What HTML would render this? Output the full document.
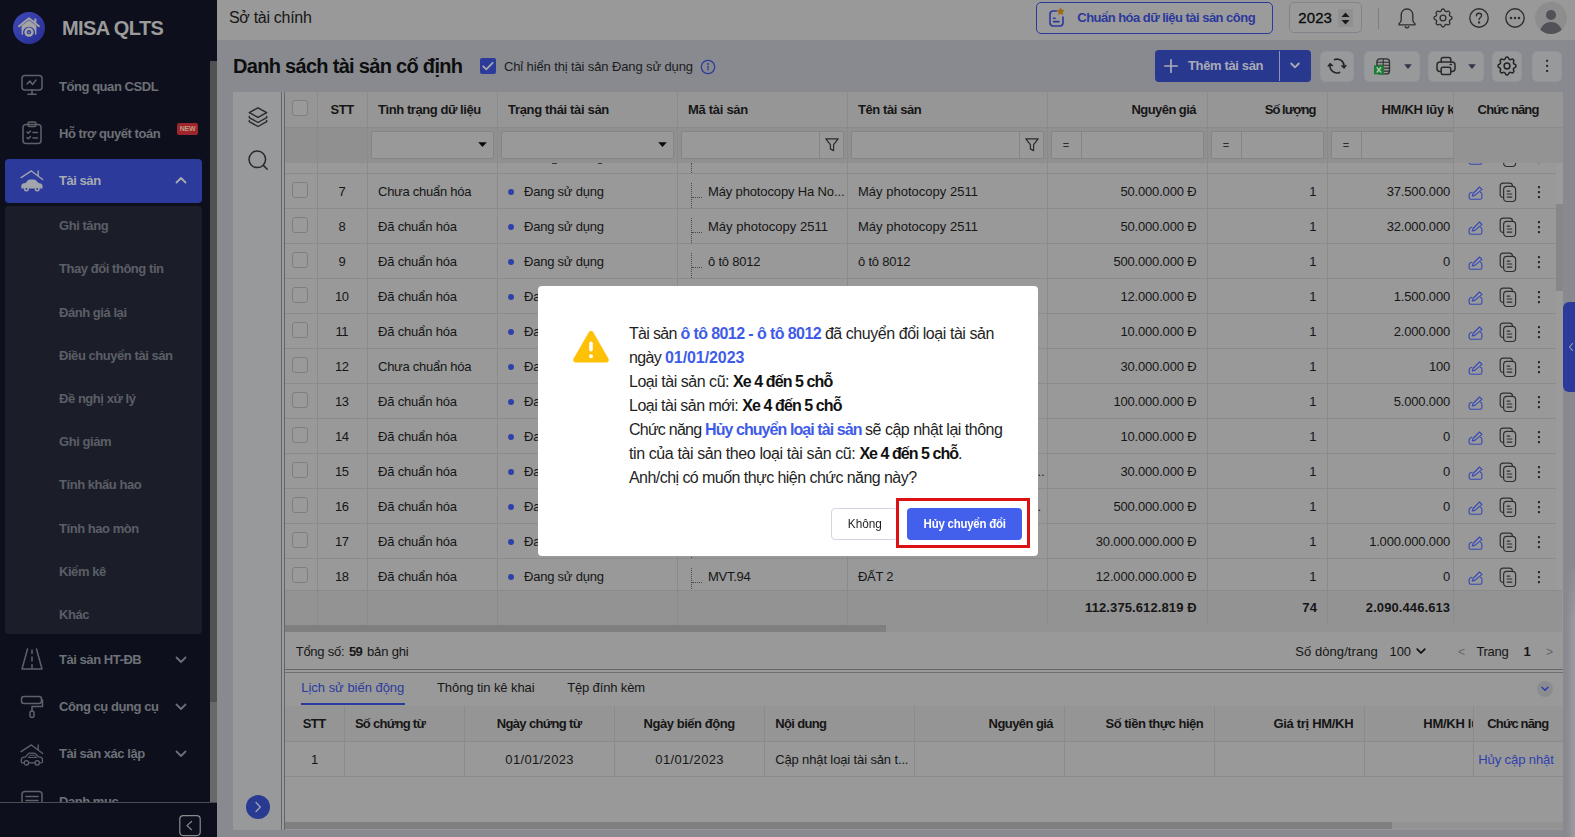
<!DOCTYPE html><html lang="vi"><head><meta charset="utf-8"><title>MISA QLTS</title><style>
*{box-sizing:border-box;margin:0;padding:0}
html,body{width:1575px;height:837px;overflow:hidden}
body{position:relative;background:#888a90;font-family:"Liberation Sans",sans-serif;font-size:13px;color:#161616;}
.abs{position:absolute}
b,.b{font-weight:bold;letter-spacing:-0.4px}
/* sidebar */
#sb{position:absolute;left:0;top:0;width:217px;height:837px;background:#0d101c;overflow:hidden}
#sb .logo{position:absolute;left:13px;top:12px;width:32px;height:32px;border-radius:50%;background:linear-gradient(135deg,#3f49b8,#262c92)}
#sb .brand{position:absolute;left:62px;top:15px;font-size:20px;font-weight:bold;color:#9b9b9b;letter-spacing:-0.6px;line-height:26px;white-space:nowrap}
#sb .mi{position:absolute;left:59px;height:20px;line-height:20px;font-size:13px;color:#6e7077;white-space:nowrap;font-weight:bold;letter-spacing:-0.45px}
#sb .si{position:absolute;left:59px;height:20px;line-height:20px;font-size:13px;color:#5b5e66;white-space:nowrap;font-weight:bold;letter-spacing:-0.45px}
#sb .act{position:absolute;left:5px;top:159px;width:197px;height:44px;background:#2b3a9b;border-radius:4px}
#sb .sub{position:absolute;left:5px;top:206px;width:197px;height:428px;background:#1b1e29;border-radius:4px}
#sb .scr{position:absolute;left:210px;top:61px;width:7px;height:741px;background:#686868}
#sb .thumb{position:absolute;left:210px;top:61px;width:7px;height:641px;background:#505153}
#sb .foot{position:absolute;left:0;top:802px;width:217px;height:35px;background:#0d101c;border-top:1px solid #4a4c55}
#sb svg{position:absolute;overflow:visible}
/* topbar */
#tb{position:absolute;left:217px;top:0;width:1358px;height:40px;background:#999999}
#tb .org{position:absolute;left:12px;top:8px;font-size:16px;line-height:20px;color:#161616;letter-spacing:-0.3px}
.btn{position:absolute;border-radius:4px;background:#96979c;border:1px solid #9a9ba0}

#main{position:absolute;left:0;top:0;width:1575px;height:837px;overflow:hidden}
.t{position:absolute;white-space:nowrap;line-height:20px;height:20px}
.r{text-align:right}
.c{text-align:center}
.hb{font-weight:bold;letter-spacing:-0.42px;color:#151515}
.vl{position:absolute;width:1px;background:#8b8b8b}
.hl{position:absolute;height:1px;background:#8b8b8b}
.cb{position:absolute;width:16px;height:16px;border:1px solid #7e7e7e;border-radius:3px;background:#9a9a9a}
.fi{position:absolute;top:131px;height:28px;border:1px solid #858585;background:#999999;border-radius:2px}
.ic{position:absolute;overflow:visible}
.tbtn{position:absolute;top:50.5px;height:31px;border-radius:5px;background:#98999b;border:1px solid #92949a}

#modal{position:absolute;left:538px;top:286px;width:500px;height:270px;background:#ffffff;border-radius:4px}
#modal .ln{position:absolute;left:91px;white-space:nowrap;font-size:16px;line-height:24px;height:24px;color:#1f1f1f;white-space:pre}
#modal .ln b{color:#111}
#modal .ln b.bl{color:#3f5ce8}
#modal .k{position:absolute;left:293px;top:222px;width:67px;height:32px;border:1px solid #d3d6e0;border-radius:4px;background:#fff;text-align:center;line-height:30px;font-size:13px;color:#1f1f1f;letter-spacing:0}
#modal .h{position:absolute;left:369px;top:222px;width:115px;height:32px;border-radius:4px;background:#4260ec;text-align:center;line-height:32px;font-size:13px;color:#fff;font-weight:bold;letter-spacing:-0.25px;overflow:visible}
#modal .red{position:absolute;left:358px;top:212px;width:134px;height:50px;border:3px solid #dc1212}
</style></head><body>
<div id="sb">
<div class="logo"></div>
<svg style="left:16px;top:14px" width="26" height="26" viewBox="0 0 26 26"><path d="M3 12.2L13 4.2L23 12.2" fill="none" stroke="#a4a4a4" stroke-width="2" stroke-linejoin="round" stroke-linecap="round"/><rect x="18.2" y="4.6" width="2.2" height="4" fill="#a4a4a4"/><path d="M5.6 20.5V11.8L13 6.2l7.4 5.6v8.700000000000001h-1.7A6 6 0 107.3 20.5z" fill="#a4a4a4"/><circle cx="13" cy="18.2" r="4.6" fill="#a4a4a4"/><circle cx="13" cy="18.2" r="2.1" fill="#3038a2"/><circle cx="13" cy="18.2" r="0.8" fill="#a4a4a4"/></svg>
<div class="brand">MISA QLTS</div>
<div class="act"></div><div class="sub"></div>
<div class="mi" style="top:77px">Tổng quan CSDL</div>
<div class="mi" style="top:124px">Hỗ trợ quyết toán</div>
<div class="mi" style="top:171px;color:#a9abb3">Tài sản</div>
<div class="mi" style="top:650px">Tài sản HT-ĐB</div>
<div class="mi" style="top:697px">Công cụ dụng cụ</div>
<div class="mi" style="top:744px">Tài sản xác lập</div>
<div class="mi" style="top:792px">Danh mục</div>
<div class="si" style="top:216px">Ghi tăng</div>
<div class="si" style="top:259px">Thay đổi thông tin</div>
<div class="si" style="top:303px">Đánh giá lại</div>
<div class="si" style="top:346px">Điều chuyển tài sản</div>
<div class="si" style="top:389px">Đề nghị xử lý</div>
<div class="si" style="top:432px">Ghi giảm</div>
<div class="si" style="top:475px">Tính khấu hao</div>
<div class="si" style="top:519px">Tính hao mòn</div>
<div class="si" style="top:562px">Kiểm kê</div>
<div class="si" style="top:605px">Khác</div>
<div class="abs" style="left:177px;top:123px;width:21px;height:12px;background:#9d252b;border-radius:2px;color:#c09a84;font-size:7px;font-weight:bold;line-height:12px;text-align:center;letter-spacing:-0.2px">NEW</div>
<svg style="left:181px;top:180.0px" width="1" height="1"><path d="M-4.5 2.5 L0 -2 L4.5 2.5" fill="none" stroke="#a9abb3" stroke-width="1.8" stroke-linecap="round" stroke-linejoin="round"/></svg>
<svg style="left:181px;top:659.6px" width="1" height="1"><path d="M-4.5 -2.5 L0 2 L4.5 -2.5" fill="none" stroke="#6c6e75" stroke-width="1.8" stroke-linecap="round" stroke-linejoin="round"/></svg>
<svg style="left:181px;top:706.6px" width="1" height="1"><path d="M-4.5 -2.5 L0 2 L4.5 -2.5" fill="none" stroke="#6c6e75" stroke-width="1.8" stroke-linecap="round" stroke-linejoin="round"/></svg>
<svg style="left:181px;top:753.6px" width="1" height="1"><path d="M-4.5 -2.5 L0 2 L4.5 -2.5" fill="none" stroke="#6c6e75" stroke-width="1.8" stroke-linecap="round" stroke-linejoin="round"/></svg>
<svg style="left:21px;top:74px" width="22" height="22" viewBox="0 0 22 22" fill="none" stroke="#5f6168" stroke-width="1.5" stroke-linecap="round" stroke-linejoin="round"><rect x="1" y="1.5" width="20" height="14.5" rx="3"/><path d="M11 16v4M7 20.3h8"/><path d="M6 10l3-3 2.5 3.5 3.5-4.5"/></svg>
<svg style="left:21px;top:121px" width="22" height="24" viewBox="0 0 22 24" fill="none" stroke="#5f6168" stroke-width="1.5" stroke-linecap="round" stroke-linejoin="round"><rect x="2" y="3.5" width="18" height="19" rx="3"/><rect x="7" y="1" width="8" height="4.5" rx="1.5"/><path d="M6 11l1.3 1.3L9.5 10M12 11.5h4.5M6 16.5l1.3 1.3L9.5 15.5M12 17h4.5"/></svg>
<svg style="left:19px;top:167px" width="26" height="26" viewBox="0 0 26 26"><path d="M2.1 10.6L12.4 3.9L23.7 12.6M19.2 4v4.6" fill="none" stroke="#a3a5ad" stroke-width="1.3" stroke-linecap="round" stroke-linejoin="round"/><path d="M2.3 21.6v-2.400000000000002c0-1.6 1-2.600000000000001 2.6-2.900000000000002l1.7-.3 2.300000000000001-2.700000000000001c.5-.6 1.1-.9 1.9-.9h3.900000000000001c.9 0 1.6.3 2.200000000000001.9l2.600000000000001 2.700000000000001 2 .4c1.300000000000001.3 2 1.200000000000001 2 2.500000000000001v2.700000000000001z" fill="#a3a5ad"/><circle cx="7.4" cy="22" r="2.5" fill="#a3a5ad"/><circle cx="18.2" cy="22" r="2.5" fill="#a3a5ad"/><circle cx="7.4" cy="22" r="1" fill="#2b3a9b"/><circle cx="18.2" cy="22" r="1" fill="#2b3a9b"/></svg>
<svg style="left:20px;top:647px" width="24" height="24" viewBox="0 0 24 24" fill="none" stroke="#5f6168" stroke-width="1.5" stroke-linecap="round" stroke-linejoin="round"><path d="M7.5 2L2 22h20L16.500000000000004 2"/><path d="M12 3v3.500000000000001M12 10v4M12 17.5v3.500000000000001"/></svg>
<svg style="left:20px;top:695px" width="24" height="24" viewBox="0 0 24 24" fill="none" stroke="#5f6168" stroke-width="1.5" stroke-linecap="round" stroke-linejoin="round"><rect x="1.5" y="1.5" width="20" height="7" rx="2.5"/><path d="M21.5 5h1v6.5h-10.5v4.500000000000001"/><rect x="10" y="16" width="4" height="6.5" rx="2"/></svg>
<svg style="left:19px;top:741px" width="26" height="26" viewBox="0 0 26 26" fill="none" stroke="#5f6168" stroke-width="1.3" stroke-linecap="round" stroke-linejoin="round"><path d="M2.1 10.6L12.4 3.9L23.7 12.6M19.2 4v4.6"/><path d="M4.6 21.8H3.6c-.8 0-1.300000000000001-.5-1.300000000000001-1.300000000000001v-1.5c0-1.6 1-2.600000000000001 2.6-2.900000000000002l1.7-.3 2.300000000000001-2.700000000000001c.5-.6 1.1-.9 1.9-.9h3.900000000000001c.9 0 1.6.3 2.200000000000001.9l2.600000000000001 2.700000000000001 2 .4c1.300000000000001.3 2 1.200000000000001 2 2.500000000000001v1.8c0 .8-.5 1.300000000000001-1.300000000000001 1.300000000000001h-.8M10 21.8h5.6"/><circle cx="7.4" cy="21.8" r="2.2"/><circle cx="18.2" cy="21.8" r="2.2"/><path d="M9.6 16.2l1.6-2h4.2l2 2z" stroke-width="1"/></svg>
<svg style="left:21px;top:790px" width="22" height="22" viewBox="0 0 22 22" fill="none" stroke="#5f6168" stroke-width="1.5" stroke-linecap="round" stroke-linejoin="round"><rect x="1" y="1.5" width="20" height="16" rx="3"/><path d="M5 6.5h12M5 10.5h12"/></svg>
<div class="scr"></div><div class="thumb"></div>
<div class="foot"></div>
<svg style="left:179px;top:815px" width="22" height="22" viewBox="0 0 22 22" fill="none" stroke="#8b8b8b" stroke-width="1.2" stroke-linecap="round" stroke-linejoin="round"><rect x="0.8" y="0.6" width="20.4" height="20" rx="3.5"/><path d="M12.5 6.5L8 10.600000000000001L12.5 14.7"/></svg>
</div>
<div id="tb"><div class="org">Sở tài chính</div></div>
<div id="main">
<div class="abs" style="left:1036px;top:2px;width:237px;height:32px;border:1px solid #2b3a9b;border-radius:5px;background:#9b9b9b"></div>
<div class="t" style="top:8px;letter-spacing:-0.528px;font-weight:bold;color:#2c399c;left:1077.3px;">Chuẩn hóa dữ liệu tài sản công</div>
<svg class="ic" style="left:1048px;top:6px" width="18" height="22" viewBox="0 0 18 22"><path d="M8.5 5H5.2C3.4 5 2 6.4 2 8.2v8.6C2 18.600000000000001 3.4 20 5.2 20h6.6c1.8 0 3.2-1.4 3.2-3.2V11" fill="none" stroke="#2c399c" stroke-width="1.6" stroke-linecap="round"/><path d="M5.5 12.2h1.6M5.5 15.600000000000001h5.5" stroke="#2c399c" stroke-width="1.6" stroke-linecap="round"/><path d="M12.6 1.2l1.25 2.6 2.85.4-2.05 2 .5 2.85-2.55-1.35-2.55 1.35.5-2.85-2.05-2 2.85-.4z" fill="#9c6a12"/></svg>
<div class="abs" style="left:1289px;top:2px;width:73px;height:31px;border:1px solid #82848c;border-radius:5px;background:#9a9a9a"></div>
<div class="t" style="top:8px;letter-spacing:0.075px;font-size:15px;color:#0a0a0a;left:1298.3px;-webkit-text-stroke:0.3px #0a0a0a;">2023</div>
<div class="abs" style="left:1338px;top:9px;width:15px;height:18px;background:#909090"></div>
<svg class="ic" style="left:1341px;top:12px" width="9" height="13" viewBox="0 0 9 13"><path d="M0.5 5L4.5 0.5L8.5 5zM0.5 8L4.5 12.5L8.5 8z" fill="#1a1a1a"/></svg>
<div class="abs" style="left:1378px;top:8px;width:1px;height:21px;background:#7e7e7e"></div>
<svg class="ic" style="left:1397px;top:8px" width="20" height="21" viewBox="0 0 20 21" fill="none" stroke="#2e2e2e" stroke-width="1.35" stroke-linecap="round" stroke-linejoin="round"><path d="M10 1C6.3 1 4.2 3.8 4.2 7.2v4.9c0 1.5-.9 2.7-2.2 3.700000000000001V16.8h16v-1c-1.3-1-2.2-2.2-2.2-3.700000000000001V7.2C15.8 3.8 13.700000000000001 1 10 1z"/><path d="M8.3 18.7c.3.7.9 1.1 1.7 1.1s1.4-.4 1.7-1.1"/></svg>
<svg class="ic" style="left:1433px;top:8px" width="20" height="20" viewBox="0 0 20 20" fill="none" stroke="#2e2e2e" stroke-width="1.35" stroke-linecap="round" stroke-linejoin="round"><path d="M8.325 2.317c.426-1.756 2.924-1.756 3.35 0a1.724 1.724 0 002.573 1.066c1.543-.94 3.31.826 2.37 2.37a1.724 1.724 0 001.065 2.572c1.756.426 1.756 2.924 0 3.35a1.724 1.724 0 00-1.066 2.573c.94 1.543-.826 3.31-2.37 2.37a1.724 1.724 0 00-2.572 1.065c-.426 1.756-2.924 1.756-3.35 0a1.724 1.724 0 00-2.573-1.066c-1.543.94-3.31-.826-2.37-2.37a1.724 1.724 0 00-1.065-2.572c-1.756-.426-1.756-2.924 0-3.35a1.724 1.724 0 001.066-2.573c-.94-1.543.826-3.31 2.37-2.37.996.608 2.296.07 2.572-1.065z"/><circle cx="10" cy="10" r="2.9"/></svg>
<svg class="ic" style="left:1469px;top:8px" width="20" height="20" viewBox="0 0 20 20" fill="none" stroke="#2e2e2e" stroke-width="1.35" stroke-linecap="round" stroke-linejoin="round"><circle cx="10" cy="10" r="9.2"/><path d="M7.4 7.7c0-1.5 1.1-2.5 2.6-2.5s2.6 1 2.6 2.3c0 1.9-2.5 2-2.5 4"/><circle cx="10.1" cy="14.4" r="0.5" fill="#2e2e2e"/></svg>
<svg class="ic" style="left:1505px;top:8px" width="20" height="20" viewBox="0 0 20 20" fill="none" stroke="#2e2e2e" stroke-width="1.35" stroke-linecap="round" stroke-linejoin="round"><circle cx="10" cy="10" r="9.2"/><circle cx="6" cy="10" r="0.6" fill="#2e2e2e"/><circle cx="10" cy="10" r="0.6" fill="#2e2e2e"/><circle cx="14" cy="10" r="0.6" fill="#2e2e2e"/></svg>
<div class="abs" style="left:1535px;top:1.5px;width:32px;height:32px;border-radius:50%;background:#8d8d8d;overflow:hidden"><div class="abs" style="left:11.4px;top:8.8px;width:9.8px;height:9.8px;border-radius:50%;background:#515157"></div><div class="abs" style="left:5px;top:20.6px;width:22.4px;height:22px;border-radius:50%;background:#515157"></div></div>
<div class="t" style="top:53px;letter-spacing:-0.697px;font-size:20px;font-weight:bold;color:#0e0e0e;line-height:26px;height:26px;left:233px;">Danh sách tài sản cố định</div>
<div class="abs" style="left:480px;top:58px;width:16px;height:16px;border-radius:2px;background:#2b3a9b"></div>
<svg class="ic" style="left:480px;top:58px" width="16" height="16" viewBox="0 0 16 16"><path d="M3.2 8.3l3.1 3.1 6.3-6.6" fill="none" stroke="#a6a6a6" stroke-width="1.9" stroke-linecap="round" stroke-linejoin="round"/></svg>
<div class="t" style="top:57px;letter-spacing:-0.125px;color:#1c1c1c;left:504px;">Chỉ hiển thị tài sản Đang sử dụng</div>
<svg class="ic" style="left:700px;top:59px" width="16" height="16" viewBox="0 0 16 16" fill="none" stroke="#2b3a9b" stroke-width="1.2" stroke-linecap="round"><circle cx="8" cy="8" r="6.7"/><path d="M8 7.3v3.7"/><circle cx="8" cy="4.9" r="0.4" fill="#2b3a9b"/></svg>
<div class="abs" style="left:1155px;top:50px;width:156px;height:32px;border-radius:4px;background:#28388f"></div>
<div class="abs" style="left:1279px;top:51px;width:1px;height:30px;background:#8e93b8"></div>
<svg class="ic" style="left:1164px;top:59px" width="14" height="14" viewBox="0 0 14 14"><path d="M7 0.8v12.4M0.8 7h12.4" stroke="#a9abb6" stroke-width="1.7" stroke-linecap="round"/></svg>
<div class="t" style="top:56px;letter-spacing:-0.361px;font-weight:bold;color:#a9abb6;left:1188px;">Thêm tài sản</div>
<svg class="ic" style="left:1290px;top:62px" width="10" height="8" viewBox="0 0 10 8"><path d="M1.2 1.5L5 5.3 8.8 1.5" fill="none" stroke="#a9abb6" stroke-width="1.9" stroke-linecap="round" stroke-linejoin="round"/></svg>
<div class="tbtn" style="left:1320px;width:34px"></div>
<div class="tbtn" style="left:1364px;width:56px"></div>
<div class="tbtn" style="left:1428px;width:56px"></div>
<div class="tbtn" style="left:1492px;width:30px"></div>
<div class="tbtn" style="left:1532px;width:30px"></div>
<svg class="ic" style="left:1327px;top:56px" width="20" height="20" viewBox="0 0 20 20" fill="none" stroke="#262626" stroke-width="1.6" stroke-linecap="round" stroke-linejoin="round"><path d="M7.6 3.6A6.9 6.9 0 0117 10.5M12.6 16.400000000000002A6.9 6.9 0 013.1 8.9"/><path d="M14.6 9.8l2.5 2.3 2-2.7" fill="#262626" stroke-width="1.2"/><path d="M1.1 10.2l1.9-2.7 2.6 2.2" fill="#262626" stroke-width="1.2"/></svg>
<svg class="ic" style="left:1373px;top:57px" width="18" height="18" viewBox="0 0 18 18"><rect x="3.9" y="1.9" width="12.6" height="15" rx="3" fill="none" stroke="#2e2e2e" stroke-width="1.3"/><path d="M10.2 2v15M4 5.2h12.5M4 8.2h12.5M4 11.1h12.5M4 14.1h12.5" stroke="#2e2e2e" stroke-width="1.1"/><rect x="1" y="8.3" width="10" height="9.1" fill="#1f7a35"/><path d="M3.7 10.3l4.4 5.2M8.1 10.3l-4.4 5.2" stroke="#a9c9b0" stroke-width="1.4"/></svg>
<svg class="ic" style="left:1404px;top:64px" width="8" height="5" viewBox="0 0 8 5"><path d="M0.2 0.3h7.6L4 4.9z" fill="#2f3447"/></svg>
<svg class="ic" style="left:1436px;top:56px" width="20" height="20" viewBox="0 0 20 20" fill="none" stroke="#2a2a2a" stroke-width="1.5" stroke-linecap="round" stroke-linejoin="round"><path d="M5.2 6V3.4c0-1.1.8-1.9 1.9-1.9h5.800000000000001c1.1 0 1.9.8 1.9 1.9V6"/><rect x="1" y="6" width="18" height="9.5" rx="3"/><rect x="5.2" y="11.2" width="9.6" height="7.3" rx="1.8" fill="#979a9f"/><path d="M14.2 8.6h1.2"/></svg>
<svg class="ic" style="left:1468px;top:64px" width="8" height="5" viewBox="0 0 8 5"><path d="M0.2 0.3h7.6L4 4.9z" fill="#2f3447"/></svg>
<svg class="ic" style="left:1497px;top:56px" width="20" height="20" viewBox="0 0 20 20" fill="none" stroke="#222" stroke-width="1.5" stroke-linecap="round" stroke-linejoin="round"><path d="M8.325 2.317c.426-1.756 2.924-1.756 3.35 0a1.724 1.724 0 002.573 1.066c1.543-.94 3.31.826 2.37 2.37a1.724 1.724 0 001.065 2.572c1.756.426 1.756 2.924 0 3.35a1.724 1.724 0 00-1.066 2.573c.94 1.543-.826 3.31-2.37 2.37a1.724 1.724 0 00-2.572 1.065c-.426 1.756-2.924 1.756-3.35 0a1.724 1.724 0 00-2.573-1.066c-1.543.94-3.31-.826-2.37-2.37a1.724 1.724 0 00-1.065-2.572c-1.756-.426-1.756-2.924 0-3.35a1.724 1.724 0 001.066-2.573c-.94-1.543.826-3.31 2.37-2.37.996.608 2.296.07 2.572-1.065z"/><circle cx="10" cy="10" r="2.9"/></svg>
<svg class="ic" style="left:1545px;top:59px" width="4" height="14" viewBox="0 0 4 14"><rect x="1.1" y="0.8" width="2" height="2" fill="#23273a"/><rect x="1.1" y="5.9" width="2" height="2" fill="#23273a"/><rect x="1.1" y="11" width="2" height="2" fill="#23273a"/></svg>
<div class="abs" style="left:233px;top:92px;width:1330px;height:738px;background:#999999"></div>
<div class="abs" style="left:233px;top:92px;width:49px;height:738px;background:#98999b"></div>
<div class="abs" style="left:281px;top:92px;width:4px;height:738px;background:#9b9b9b;border-left:1px solid #636568;border-right:1px solid #636568"></div>
<svg class="ic" style="left:247px;top:106px" width="22" height="22" viewBox="0 0 22 22" fill="none" stroke="#2a2a2a" stroke-width="1.4" stroke-linecap="round" stroke-linejoin="round"><path d="M11 1.8L2.3 6.6 11 11.4l8.7-4.800000000000001z"/><path d="M2.3 10.5v1.2l8.7 4.800000000000001 8.7-4.800000000000001v-1.2M2.3 14.5v1.2L11 20.5l8.7-4.800000000000001v-1.2"/></svg>
<svg class="ic" style="left:247px;top:149px" width="22" height="22" viewBox="0 0 22 22" fill="none" stroke="#2a2a2a" stroke-width="1.5" stroke-linecap="round"><circle cx="10.3" cy="10.3" r="8.3"/><path d="M16.6 16.6l3.6 3.6"/></svg>
<div class="abs" style="left:246px;top:795px;width:24px;height:24px;border-radius:50%;background:#283a92"></div>
<svg class="ic" style="left:254px;top:801px" width="8" height="12" viewBox="0 0 8 12"><path d="M2 1.5L6.3 6 2 10.5" fill="none" stroke="#a0a4b8" stroke-width="1.3" stroke-linecap="round" stroke-linejoin="round"/></svg>
<div class="abs" style="left:285px;top:92px;width:1278px;height:36px;background:#969696"></div>
<div class="abs" style="left:285px;top:128px;width:1278px;height:35px;background:#909090"></div>
<div class="hl" style="left:285px;top:127px;width:1278px"></div>
<div class="abs" style="left:285px;top:163px;width:1168px;height:427px;overflow:hidden">
<div class="hl" style="left:0;top:10px;width:1168px"></div>
<div class="hl" style="left:0;top:45px;width:1168px"></div>
<div class="cb" style="left:7px;top:19px"></div>
<div class="t" style="top:19px;letter-spacing:-0.181px;left:31.91px;width:50px;text-align:center;">7</div>
<div class="t" style="top:19px;letter-spacing:-0.261px;left:93px;">Chưa chuẩn hóa</div>
<div class="abs" style="left:223px;top:26px;width:6px;height:6px;border-radius:50%;background:#2f40a8"></div>
<div class="t" style="top:19px;letter-spacing:-0.222px;left:239px;">Đang sử dụng</div>
<div class="abs" style="left:406px;top:20px;width:0;height:25px;border-left:1px dotted #4a4a4a"></div>
<div class="abs" style="left:407px;top:34px;width:10px;height:0;border-top:1px dotted #4a4a4a"></div>
<div class="t" style="top:19px;letter-spacing:-0.141px;left:423px;">Máy photocopy Ha No...</div>
<div class="t" style="top:19px;letter-spacing:0.016px;left:573px;">Máy photocopy 2511</div>
<div class="t" style="top:19px;letter-spacing:-0.177px;left:771.42px;width:140px;text-align:right;">50.000.000 Đ</div>
<div class="t" style="top:19px;letter-spacing:-0.181px;left:931.22px;width:100px;text-align:right;">1</div>
<div class="t" style="top:19px;letter-spacing:-0.181px;left:1052.02px;width:113px;text-align:right;">37.500.000</div>
<div class="hl" style="left:0;top:80px;width:1168px"></div>
<div class="cb" style="left:7px;top:54px"></div>
<div class="t" style="top:54px;letter-spacing:-0.181px;left:31.91px;width:50px;text-align:center;">8</div>
<div class="t" style="top:54px;letter-spacing:-0.178px;left:93px;">Đã chuẩn hóa</div>
<div class="abs" style="left:223px;top:61px;width:6px;height:6px;border-radius:50%;background:#2f40a8"></div>
<div class="t" style="top:54px;letter-spacing:-0.222px;left:239px;">Đang sử dụng</div>
<div class="abs" style="left:406px;top:55px;width:0;height:25px;border-left:1px dotted #4a4a4a"></div>
<div class="abs" style="left:407px;top:69px;width:10px;height:0;border-top:1px dotted #4a4a4a"></div>
<div class="t" style="top:54px;letter-spacing:0.016px;left:423px;">Máy photocopy 2511</div>
<div class="t" style="top:54px;letter-spacing:0.016px;left:573px;">Máy photocopy 2511</div>
<div class="t" style="top:54px;letter-spacing:-0.177px;left:771.42px;width:140px;text-align:right;">50.000.000 Đ</div>
<div class="t" style="top:54px;letter-spacing:-0.181px;left:931.22px;width:100px;text-align:right;">1</div>
<div class="t" style="top:54px;letter-spacing:-0.181px;left:1052.02px;width:113px;text-align:right;">32.000.000</div>
<div class="hl" style="left:0;top:115px;width:1168px"></div>
<div class="cb" style="left:7px;top:89px"></div>
<div class="t" style="top:89px;letter-spacing:-0.181px;left:31.91px;width:50px;text-align:center;">9</div>
<div class="t" style="top:89px;letter-spacing:-0.178px;left:93px;">Đã chuẩn hóa</div>
<div class="abs" style="left:223px;top:96px;width:6px;height:6px;border-radius:50%;background:#2f40a8"></div>
<div class="t" style="top:89px;letter-spacing:-0.222px;left:239px;">Đang sử dụng</div>
<div class="abs" style="left:406px;top:90px;width:0;height:25px;border-left:1px dotted #4a4a4a"></div>
<div class="abs" style="left:407px;top:104px;width:10px;height:0;border-top:1px dotted #4a4a4a"></div>
<div class="t" style="top:89px;letter-spacing:-0.203px;left:423px;">ô tô 8012</div>
<div class="t" style="top:89px;letter-spacing:-0.203px;left:573px;">ô tô 8012</div>
<div class="t" style="top:89px;letter-spacing:-0.178px;left:771.42px;width:140px;text-align:right;">500.000.000 Đ</div>
<div class="t" style="top:89px;letter-spacing:-0.181px;left:931.22px;width:100px;text-align:right;">1</div>
<div class="t" style="top:89px;letter-spacing:-0.181px;left:1052.02px;width:113px;text-align:right;">0</div>
<div class="hl" style="left:0;top:150px;width:1168px"></div>
<div class="cb" style="left:7px;top:124px"></div>
<div class="t" style="top:124px;letter-spacing:-0.362px;left:31.82px;width:50px;text-align:center;">10</div>
<div class="t" style="top:124px;letter-spacing:-0.178px;left:93px;">Đã chuẩn hóa</div>
<div class="abs" style="left:223px;top:131px;width:6px;height:6px;border-radius:50%;background:#2f40a8"></div>
<div class="t" style="top:124px;letter-spacing:-0.222px;left:239px;">Đang sử dụng</div>
<div class="abs" style="left:406px;top:125px;width:0;height:25px;border-left:1px dotted #4a4a4a"></div>
<div class="abs" style="left:407px;top:139px;width:10px;height:0;border-top:1px dotted #4a4a4a"></div>
<div class="t" style="top:124px;letter-spacing:-0.204px;left:423px;">Máy tính 2511</div>
<div class="t" style="top:124px;letter-spacing:-0.197px;left:573px;">Máy tính để bàn 2511</div>
<div class="t" style="top:124px;letter-spacing:-0.177px;left:771.42px;width:140px;text-align:right;">12.000.000 Đ</div>
<div class="t" style="top:124px;letter-spacing:-0.181px;left:931.22px;width:100px;text-align:right;">1</div>
<div class="t" style="top:124px;letter-spacing:-0.181px;left:1052.02px;width:113px;text-align:right;">1.500.000</div>
<div class="hl" style="left:0;top:185px;width:1168px"></div>
<div class="cb" style="left:7px;top:159px"></div>
<div class="t" style="top:159px;letter-spacing:-0.338px;left:31.83px;width:50px;text-align:center;">11</div>
<div class="t" style="top:159px;letter-spacing:-0.178px;left:93px;">Đã chuẩn hóa</div>
<div class="abs" style="left:223px;top:166px;width:6px;height:6px;border-radius:50%;background:#2f40a8"></div>
<div class="t" style="top:159px;letter-spacing:-0.222px;left:239px;">Đang sử dụng</div>
<div class="abs" style="left:406px;top:160px;width:0;height:25px;border-left:1px dotted #4a4a4a"></div>
<div class="abs" style="left:407px;top:174px;width:10px;height:0;border-top:1px dotted #4a4a4a"></div>
<div class="t" style="top:159px;letter-spacing:-0.21px;left:423px;">Máy in 2511</div>
<div class="t" style="top:159px;letter-spacing:-0.21px;left:573px;">Máy in 2511</div>
<div class="t" style="top:159px;letter-spacing:-0.177px;left:771.42px;width:140px;text-align:right;">10.000.000 Đ</div>
<div class="t" style="top:159px;letter-spacing:-0.181px;left:931.22px;width:100px;text-align:right;">1</div>
<div class="t" style="top:159px;letter-spacing:-0.181px;left:1052.02px;width:113px;text-align:right;">2.000.000</div>
<div class="hl" style="left:0;top:220px;width:1168px"></div>
<div class="cb" style="left:7px;top:194px"></div>
<div class="t" style="top:194px;letter-spacing:-0.362px;left:31.82px;width:50px;text-align:center;">12</div>
<div class="t" style="top:194px;letter-spacing:-0.261px;left:93px;">Chưa chuẩn hóa</div>
<div class="abs" style="left:223px;top:201px;width:6px;height:6px;border-radius:50%;background:#2f40a8"></div>
<div class="t" style="top:194px;letter-spacing:-0.222px;left:239px;">Đang sử dụng</div>
<div class="abs" style="left:406px;top:195px;width:0;height:25px;border-left:1px dotted #4a4a4a"></div>
<div class="abs" style="left:407px;top:209px;width:10px;height:0;border-top:1px dotted #4a4a4a"></div>
<div class="t" style="top:194px;letter-spacing:-0.211px;left:423px;">Máy chiếu 01</div>
<div class="t" style="top:194px;letter-spacing:-0.211px;left:573px;">Máy chiếu 01</div>
<div class="t" style="top:194px;letter-spacing:-0.177px;left:771.42px;width:140px;text-align:right;">30.000.000 Đ</div>
<div class="t" style="top:194px;letter-spacing:-0.181px;left:931.22px;width:100px;text-align:right;">1</div>
<div class="t" style="top:194px;letter-spacing:-0.271px;left:1051.93px;width:113px;text-align:right;">100</div>
<div class="hl" style="left:0;top:255px;width:1168px"></div>
<div class="cb" style="left:7px;top:229px"></div>
<div class="t" style="top:229px;letter-spacing:-0.362px;left:31.82px;width:50px;text-align:center;">13</div>
<div class="t" style="top:229px;letter-spacing:-0.178px;left:93px;">Đã chuẩn hóa</div>
<div class="abs" style="left:223px;top:236px;width:6px;height:6px;border-radius:50%;background:#2f40a8"></div>
<div class="t" style="top:229px;letter-spacing:-0.222px;left:239px;">Đang sử dụng</div>
<div class="abs" style="left:406px;top:230px;width:0;height:25px;border-left:1px dotted #4a4a4a"></div>
<div class="abs" style="left:407px;top:244px;width:10px;height:0;border-top:1px dotted #4a4a4a"></div>
<div class="t" style="top:229px;letter-spacing:-0.21px;left:423px;">Điều hòa 01</div>
<div class="t" style="top:229px;letter-spacing:-0.21px;left:573px;">Điều hòa 01</div>
<div class="t" style="top:229px;letter-spacing:-0.178px;left:771.42px;width:140px;text-align:right;">100.000.000 Đ</div>
<div class="t" style="top:229px;letter-spacing:-0.181px;left:931.22px;width:100px;text-align:right;">1</div>
<div class="t" style="top:229px;letter-spacing:-0.181px;left:1052.02px;width:113px;text-align:right;">5.000.000</div>
<div class="hl" style="left:0;top:290px;width:1168px"></div>
<div class="cb" style="left:7px;top:264px"></div>
<div class="t" style="top:264px;letter-spacing:-0.362px;left:31.82px;width:50px;text-align:center;">14</div>
<div class="t" style="top:264px;letter-spacing:-0.178px;left:93px;">Đã chuẩn hóa</div>
<div class="abs" style="left:223px;top:271px;width:6px;height:6px;border-radius:50%;background:#2f40a8"></div>
<div class="t" style="top:264px;letter-spacing:-0.222px;left:239px;">Đang sử dụng</div>
<div class="abs" style="left:406px;top:265px;width:0;height:25px;border-left:1px dotted #4a4a4a"></div>
<div class="abs" style="left:407px;top:279px;width:10px;height:0;border-top:1px dotted #4a4a4a"></div>
<div class="t" style="top:264px;letter-spacing:-0.222px;left:423px;">Bàn họp 01</div>
<div class="t" style="top:264px;letter-spacing:-0.222px;left:573px;">Bàn họp 01</div>
<div class="t" style="top:264px;letter-spacing:-0.177px;left:771.42px;width:140px;text-align:right;">10.000.000 Đ</div>
<div class="t" style="top:264px;letter-spacing:-0.181px;left:931.22px;width:100px;text-align:right;">1</div>
<div class="t" style="top:264px;letter-spacing:-0.181px;left:1052.02px;width:113px;text-align:right;">0</div>
<div class="hl" style="left:0;top:325px;width:1168px"></div>
<div class="cb" style="left:7px;top:299px"></div>
<div class="t" style="top:299px;letter-spacing:-0.362px;left:31.82px;width:50px;text-align:center;">15</div>
<div class="t" style="top:299px;letter-spacing:-0.178px;left:93px;">Đã chuẩn hóa</div>
<div class="abs" style="left:223px;top:306px;width:6px;height:6px;border-radius:50%;background:#2f40a8"></div>
<div class="t" style="top:299px;letter-spacing:-0.222px;left:239px;">Đang sử dụng</div>
<div class="abs" style="left:406px;top:300px;width:0;height:25px;border-left:1px dotted #4a4a4a"></div>
<div class="abs" style="left:407px;top:314px;width:10px;height:0;border-top:1px dotted #4a4a4a"></div>
<div class="t" style="top:299px;letter-spacing:-0.246px;left:423px;">TS.0015</div>
<div class="t" style="top:299px;letter-spacing:-0.188px;left:573px;">Thiết bị văn phòng 01</div>
<div class="t" style="top:299px;letter-spacing:-0.177px;left:771.42px;width:140px;text-align:right;">30.000.000 Đ</div>
<div class="t" style="top:299px;letter-spacing:-0.181px;left:931.22px;width:100px;text-align:right;">1</div>
<div class="t" style="top:299px;letter-spacing:-0.181px;left:1052.02px;width:113px;text-align:right;">0</div>
<div class="hl" style="left:0;top:360px;width:1168px"></div>
<div class="cb" style="left:7px;top:334px"></div>
<div class="t" style="top:334px;letter-spacing:-0.362px;left:31.82px;width:50px;text-align:center;">16</div>
<div class="t" style="top:334px;letter-spacing:-0.178px;left:93px;">Đã chuẩn hóa</div>
<div class="abs" style="left:223px;top:341px;width:6px;height:6px;border-radius:50%;background:#2f40a8"></div>
<div class="t" style="top:334px;letter-spacing:-0.222px;left:239px;">Đang sử dụng</div>
<div class="abs" style="left:406px;top:335px;width:0;height:25px;border-left:1px dotted #4a4a4a"></div>
<div class="abs" style="left:407px;top:349px;width:10px;height:0;border-top:1px dotted #4a4a4a"></div>
<div class="t" style="top:334px;letter-spacing:-0.246px;left:423px;">TS.0016</div>
<div class="t" style="top:334px;letter-spacing:-0.191px;left:573px;">Xe ô tô phục vụ 02</div>
<div class="t" style="top:334px;letter-spacing:-0.178px;left:771.42px;width:140px;text-align:right;">500.000.000 Đ</div>
<div class="t" style="top:334px;letter-spacing:-0.181px;left:931.22px;width:100px;text-align:right;">1</div>
<div class="t" style="top:334px;letter-spacing:-0.181px;left:1052.02px;width:113px;text-align:right;">0</div>
<div class="hl" style="left:0;top:395px;width:1168px"></div>
<div class="cb" style="left:7px;top:369px"></div>
<div class="t" style="top:369px;letter-spacing:-0.362px;left:31.82px;width:50px;text-align:center;">17</div>
<div class="t" style="top:369px;letter-spacing:-0.178px;left:93px;">Đã chuẩn hóa</div>
<div class="abs" style="left:223px;top:376px;width:6px;height:6px;border-radius:50%;background:#2f40a8"></div>
<div class="t" style="top:369px;letter-spacing:-0.222px;left:239px;">Đang sử dụng</div>
<div class="abs" style="left:406px;top:370px;width:0;height:25px;border-left:1px dotted #4a4a4a"></div>
<div class="abs" style="left:407px;top:384px;width:10px;height:0;border-top:1px dotted #4a4a4a"></div>
<div class="t" style="top:369px;letter-spacing:-0.273px;left:423px;">NHA.01</div>
<div class="t" style="top:369px;letter-spacing:-0.2px;left:573px;">Nhà làm việc 01</div>
<div class="t" style="top:369px;letter-spacing:-0.172px;left:771.43px;width:140px;text-align:right;">30.000.000.000 Đ</div>
<div class="t" style="top:369px;letter-spacing:-0.181px;left:931.22px;width:100px;text-align:right;">1</div>
<div class="t" style="top:369px;letter-spacing:-0.173px;left:1052.03px;width:113px;text-align:right;">1.000.000.000</div>
<div class="hl" style="left:0;top:430px;width:1168px"></div>
<div class="cb" style="left:7px;top:404px"></div>
<div class="t" style="top:404px;letter-spacing:-0.362px;left:31.82px;width:50px;text-align:center;">18</div>
<div class="t" style="top:404px;letter-spacing:-0.178px;left:93px;">Đã chuẩn hóa</div>
<div class="abs" style="left:223px;top:411px;width:6px;height:6px;border-radius:50%;background:#2f40a8"></div>
<div class="t" style="top:404px;letter-spacing:-0.222px;left:239px;">Đang sử dụng</div>
<div class="abs" style="left:406px;top:405px;width:0;height:25px;border-left:1px dotted #4a4a4a"></div>
<div class="abs" style="left:407px;top:419px;width:10px;height:0;border-top:1px dotted #4a4a4a"></div>
<div class="t" style="top:404px;letter-spacing:-0.264px;left:423px;">MVT.94</div>
<div class="t" style="top:404px;letter-spacing:-0.275px;left:573px;">ĐẤT 2</div>
<div class="t" style="top:404px;letter-spacing:-0.172px;left:771.43px;width:140px;text-align:right;">12.000.000.000 Đ</div>
<div class="t" style="top:404px;letter-spacing:-0.181px;left:931.22px;width:100px;text-align:right;">1</div>
<div class="t" style="top:404px;letter-spacing:-0.181px;left:1052.02px;width:113px;text-align:right;">0</div>
<div class="t" style="top:299px;letter-spacing:-0.136px;left:719.46px;width:40px;text-align:right;">...</div>
<div class="t" style="top:334px;letter-spacing:-0.136px;left:716.06px;width:40px;text-align:right;">...</div>
<div class="abs" style="left:406px;top:0;width:0;height:10px;border-left:1px dotted #4a4a4a"></div>
<div class="abs" style="left:267px;top:0;width:5px;height:1px;background:#3a3a3a"></div>
<div class="abs" style="left:313px;top:0;width:4px;height:1px;background:#3a3a3a"></div>
</div>
<div class="vl" style="left:317px;top:92px;height:533px"></div>
<div class="vl" style="left:367px;top:92px;height:533px"></div>
<div class="vl" style="left:497px;top:92px;height:533px"></div>
<div class="vl" style="left:677px;top:92px;height:533px"></div>
<div class="vl" style="left:847px;top:92px;height:533px"></div>
<div class="vl" style="left:1047px;top:92px;height:533px"></div>
<div class="vl" style="left:1207px;top:92px;height:533px"></div>
<div class="vl" style="left:1327px;top:92px;height:533px"></div>
<div class="fi" style="left:371px;width:123px"></div>
<div class="fi" style="left:501px;width:173px"></div>
<svg class="ic" style="left:478px;top:142px" width="9" height="5" viewBox="0 0 9 5"><path d="M0.2 0.3h8.6L4.5 4.9z" fill="#0a0a0a"/></svg>
<svg class="ic" style="left:658px;top:142px" width="9" height="5" viewBox="0 0 9 5"><path d="M0.2 0.3h8.6L4.5 4.9z" fill="#0a0a0a"/></svg>
<div class="fi" style="left:681px;width:163px"></div>
<div class="vl" style="left:819px;top:132px;height:26px;background:#858585"></div>
<svg class="ic" style="left:824px;top:137px" width="16" height="16" viewBox="0 0 16 16"><path d="M1.8 1.8h12.4l-4.600000000000001 5.9v5.9l-3.2-1.7V7.7z" fill="none" stroke="#2a2a2a" stroke-width="1.2" stroke-linejoin="round"/></svg>
<div class="fi" style="left:851px;width:193px"></div>
<div class="vl" style="left:1019px;top:132px;height:26px;background:#858585"></div>
<svg class="ic" style="left:1024px;top:137px" width="16" height="16" viewBox="0 0 16 16"><path d="M1.8 1.8h12.4l-4.600000000000001 5.9v5.9l-3.2-1.7V7.7z" fill="none" stroke="#2a2a2a" stroke-width="1.2" stroke-linejoin="round"/></svg>
<div class="fi" style="left:1051px;width:153px"></div>
<div class="vl" style="left:1081px;top:132px;height:26px;background:#858585"></div>
<div class="t c" style="left:1051px;top:135px;width:30px;font-size:11px;color:#2a2a2a">=</div>
<div class="fi" style="left:1211px;width:113px"></div>
<div class="vl" style="left:1241px;top:132px;height:26px;background:#858585"></div>
<div class="t c" style="left:1211px;top:135px;width:30px;font-size:11px;color:#2a2a2a">=</div>
<div class="fi" style="left:1331px;width:129px"></div>
<div class="vl" style="left:1361px;top:132px;height:26px;background:#858585"></div>
<div class="t c" style="left:1331px;top:135px;width:30px;font-size:11px;color:#2a2a2a">=</div>
<div class="cb" style="left:292px;top:100px"></div>
<div class="t" style="top:100px;letter-spacing:-0.481px;font-weight:bold;left:330.5px;">STT</div>
<div class="t" style="top:100px;letter-spacing:-0.431px;font-weight:bold;left:378px;">Tình trạng dữ liệu</div>
<div class="t" style="top:100px;letter-spacing:-0.337px;font-weight:bold;left:508.1px;">Trạng thái tài sản</div>
<div class="t" style="top:100px;letter-spacing:-0.307px;font-weight:bold;left:688.1px;">Mã tài sản</div>
<div class="t" style="top:100px;letter-spacing:-0.412px;font-weight:bold;left:858px;">Tên tài sản</div>
<div class="t" style="top:100px;letter-spacing:-0.564px;font-weight:bold;left:1055.94px;width:140px;text-align:right;">Nguyên giá</div>
<div class="t" style="top:100px;letter-spacing:-0.968px;font-weight:bold;left:1215.43px;width:100px;text-align:right;">Số lượng</div>
<div class="t" style="top:100px;letter-spacing:-0.28px;font-weight:bold;left:1381.5px;">HM/KH lũy kế</div>
<div class="abs" style="left:1453px;top:92px;width:110px;height:36px;background:#969696"></div>
<div class="abs" style="left:1453px;top:128px;width:110px;height:35px;background:#939393"></div>
<div class="abs" style="left:1453px;top:163px;width:103px;height:427px;background:#999999;overflow:hidden">
<div class="hl" style="left:0;top:10px;width:103px"></div>
<div class="hl" style="left:0;top:10px;width:103px"></div>
<svg class="ic" style="left:15px;top:-12px" width="15" height="15" viewBox="0 0 15 15" fill="none" stroke="#3648b6" stroke-width="1.1" stroke-linecap="round" stroke-linejoin="round"><path d="M3.9 6.3C2.1 6.6 1.1 7.5 1.1 9.2v2.200000000000001c0 1.1.7 1.8 1.8 1.8h9.2c1.1 0 1.8-.7 1.8-1.8V8.200000000000001c0-1-.5-1.7-1.4-2"/><path d="M4.300000000000001 10l.8-2.5L11.5 1l2.5 2.300000000000001L6.800000000000001 9.4z"/></svg>
<svg class="ic" style="left:46px;top:-16px" width="18" height="21" viewBox="0 0 18 21" fill="none" stroke="#303030" stroke-width="1.2" stroke-linecap="round" stroke-linejoin="round"><path d="M4.6 15.5H4.2c-1.8 0-3-1.2-3-3V4.1c0-1.8 1.2-3 3-3h6.300000000000001c1.7 0 2.9 1.1 3 2.8"/><rect x="4.6" y="4.4" width="12" height="15.1" rx="3.2"/><path d="M8.2 9.2h2.6M8.2 12h4.6M8.2 15.1h4.6"/></svg>
<svg class="ic" style="left:84px;top:-12px" width="4" height="14" viewBox="0 0 4 14"><rect x="0.9" y="0.1" width="2.1" height="2.1" rx="0.6" fill="#262626"/><rect x="0.9" y="5.1" width="2.1" height="2.1" rx="0.6" fill="#262626"/><rect x="0.9" y="10.1" width="2.1" height="2.1" rx="0.6" fill="#262626"/></svg>
<div class="hl" style="left:0;top:45px;width:103px"></div>
<svg class="ic" style="left:15px;top:23px" width="15" height="15" viewBox="0 0 15 15" fill="none" stroke="#3648b6" stroke-width="1.1" stroke-linecap="round" stroke-linejoin="round"><path d="M3.9 6.3C2.1 6.6 1.1 7.5 1.1 9.2v2.200000000000001c0 1.1.7 1.8 1.8 1.8h9.2c1.1 0 1.8-.7 1.8-1.8V8.200000000000001c0-1-.5-1.7-1.4-2"/><path d="M4.300000000000001 10l.8-2.5L11.5 1l2.5 2.300000000000001L6.800000000000001 9.4z"/></svg>
<svg class="ic" style="left:46px;top:19px" width="18" height="21" viewBox="0 0 18 21" fill="none" stroke="#303030" stroke-width="1.2" stroke-linecap="round" stroke-linejoin="round"><path d="M4.6 15.5H4.2c-1.8 0-3-1.2-3-3V4.1c0-1.8 1.2-3 3-3h6.300000000000001c1.7 0 2.9 1.1 3 2.8"/><rect x="4.6" y="4.4" width="12" height="15.1" rx="3.2"/><path d="M8.2 9.2h2.6M8.2 12h4.6M8.2 15.1h4.6"/></svg>
<svg class="ic" style="left:84px;top:23px" width="4" height="14" viewBox="0 0 4 14"><rect x="0.9" y="0.1" width="2.1" height="2.1" rx="0.6" fill="#262626"/><rect x="0.9" y="5.1" width="2.1" height="2.1" rx="0.6" fill="#262626"/><rect x="0.9" y="10.1" width="2.1" height="2.1" rx="0.6" fill="#262626"/></svg>
<div class="hl" style="left:0;top:80px;width:103px"></div>
<svg class="ic" style="left:15px;top:58px" width="15" height="15" viewBox="0 0 15 15" fill="none" stroke="#3648b6" stroke-width="1.1" stroke-linecap="round" stroke-linejoin="round"><path d="M3.9 6.3C2.1 6.6 1.1 7.5 1.1 9.2v2.200000000000001c0 1.1.7 1.8 1.8 1.8h9.2c1.1 0 1.8-.7 1.8-1.8V8.200000000000001c0-1-.5-1.7-1.4-2"/><path d="M4.300000000000001 10l.8-2.5L11.5 1l2.5 2.300000000000001L6.800000000000001 9.4z"/></svg>
<svg class="ic" style="left:46px;top:54px" width="18" height="21" viewBox="0 0 18 21" fill="none" stroke="#303030" stroke-width="1.2" stroke-linecap="round" stroke-linejoin="round"><path d="M4.6 15.5H4.2c-1.8 0-3-1.2-3-3V4.1c0-1.8 1.2-3 3-3h6.300000000000001c1.7 0 2.9 1.1 3 2.8"/><rect x="4.6" y="4.4" width="12" height="15.1" rx="3.2"/><path d="M8.2 9.2h2.6M8.2 12h4.6M8.2 15.1h4.6"/></svg>
<svg class="ic" style="left:84px;top:58px" width="4" height="14" viewBox="0 0 4 14"><rect x="0.9" y="0.1" width="2.1" height="2.1" rx="0.6" fill="#262626"/><rect x="0.9" y="5.1" width="2.1" height="2.1" rx="0.6" fill="#262626"/><rect x="0.9" y="10.1" width="2.1" height="2.1" rx="0.6" fill="#262626"/></svg>
<div class="hl" style="left:0;top:115px;width:103px"></div>
<svg class="ic" style="left:15px;top:93px" width="15" height="15" viewBox="0 0 15 15" fill="none" stroke="#3648b6" stroke-width="1.1" stroke-linecap="round" stroke-linejoin="round"><path d="M3.9 6.3C2.1 6.6 1.1 7.5 1.1 9.2v2.200000000000001c0 1.1.7 1.8 1.8 1.8h9.2c1.1 0 1.8-.7 1.8-1.8V8.200000000000001c0-1-.5-1.7-1.4-2"/><path d="M4.300000000000001 10l.8-2.5L11.5 1l2.5 2.300000000000001L6.800000000000001 9.4z"/></svg>
<svg class="ic" style="left:46px;top:89px" width="18" height="21" viewBox="0 0 18 21" fill="none" stroke="#303030" stroke-width="1.2" stroke-linecap="round" stroke-linejoin="round"><path d="M4.6 15.5H4.2c-1.8 0-3-1.2-3-3V4.1c0-1.8 1.2-3 3-3h6.300000000000001c1.7 0 2.9 1.1 3 2.8"/><rect x="4.6" y="4.4" width="12" height="15.1" rx="3.2"/><path d="M8.2 9.2h2.6M8.2 12h4.6M8.2 15.1h4.6"/></svg>
<svg class="ic" style="left:84px;top:93px" width="4" height="14" viewBox="0 0 4 14"><rect x="0.9" y="0.1" width="2.1" height="2.1" rx="0.6" fill="#262626"/><rect x="0.9" y="5.1" width="2.1" height="2.1" rx="0.6" fill="#262626"/><rect x="0.9" y="10.1" width="2.1" height="2.1" rx="0.6" fill="#262626"/></svg>
<div class="hl" style="left:0;top:150px;width:103px"></div>
<svg class="ic" style="left:15px;top:128px" width="15" height="15" viewBox="0 0 15 15" fill="none" stroke="#3648b6" stroke-width="1.1" stroke-linecap="round" stroke-linejoin="round"><path d="M3.9 6.3C2.1 6.6 1.1 7.5 1.1 9.2v2.200000000000001c0 1.1.7 1.8 1.8 1.8h9.2c1.1 0 1.8-.7 1.8-1.8V8.200000000000001c0-1-.5-1.7-1.4-2"/><path d="M4.300000000000001 10l.8-2.5L11.5 1l2.5 2.300000000000001L6.800000000000001 9.4z"/></svg>
<svg class="ic" style="left:46px;top:124px" width="18" height="21" viewBox="0 0 18 21" fill="none" stroke="#303030" stroke-width="1.2" stroke-linecap="round" stroke-linejoin="round"><path d="M4.6 15.5H4.2c-1.8 0-3-1.2-3-3V4.1c0-1.8 1.2-3 3-3h6.300000000000001c1.7 0 2.9 1.1 3 2.8"/><rect x="4.6" y="4.4" width="12" height="15.1" rx="3.2"/><path d="M8.2 9.2h2.6M8.2 12h4.6M8.2 15.1h4.6"/></svg>
<svg class="ic" style="left:84px;top:128px" width="4" height="14" viewBox="0 0 4 14"><rect x="0.9" y="0.1" width="2.1" height="2.1" rx="0.6" fill="#262626"/><rect x="0.9" y="5.1" width="2.1" height="2.1" rx="0.6" fill="#262626"/><rect x="0.9" y="10.1" width="2.1" height="2.1" rx="0.6" fill="#262626"/></svg>
<div class="hl" style="left:0;top:185px;width:103px"></div>
<svg class="ic" style="left:15px;top:163px" width="15" height="15" viewBox="0 0 15 15" fill="none" stroke="#3648b6" stroke-width="1.1" stroke-linecap="round" stroke-linejoin="round"><path d="M3.9 6.3C2.1 6.6 1.1 7.5 1.1 9.2v2.200000000000001c0 1.1.7 1.8 1.8 1.8h9.2c1.1 0 1.8-.7 1.8-1.8V8.200000000000001c0-1-.5-1.7-1.4-2"/><path d="M4.300000000000001 10l.8-2.5L11.5 1l2.5 2.300000000000001L6.800000000000001 9.4z"/></svg>
<svg class="ic" style="left:46px;top:159px" width="18" height="21" viewBox="0 0 18 21" fill="none" stroke="#303030" stroke-width="1.2" stroke-linecap="round" stroke-linejoin="round"><path d="M4.6 15.5H4.2c-1.8 0-3-1.2-3-3V4.1c0-1.8 1.2-3 3-3h6.300000000000001c1.7 0 2.9 1.1 3 2.8"/><rect x="4.6" y="4.4" width="12" height="15.1" rx="3.2"/><path d="M8.2 9.2h2.6M8.2 12h4.6M8.2 15.1h4.6"/></svg>
<svg class="ic" style="left:84px;top:163px" width="4" height="14" viewBox="0 0 4 14"><rect x="0.9" y="0.1" width="2.1" height="2.1" rx="0.6" fill="#262626"/><rect x="0.9" y="5.1" width="2.1" height="2.1" rx="0.6" fill="#262626"/><rect x="0.9" y="10.1" width="2.1" height="2.1" rx="0.6" fill="#262626"/></svg>
<div class="hl" style="left:0;top:220px;width:103px"></div>
<svg class="ic" style="left:15px;top:198px" width="15" height="15" viewBox="0 0 15 15" fill="none" stroke="#3648b6" stroke-width="1.1" stroke-linecap="round" stroke-linejoin="round"><path d="M3.9 6.3C2.1 6.6 1.1 7.5 1.1 9.2v2.200000000000001c0 1.1.7 1.8 1.8 1.8h9.2c1.1 0 1.8-.7 1.8-1.8V8.200000000000001c0-1-.5-1.7-1.4-2"/><path d="M4.300000000000001 10l.8-2.5L11.5 1l2.5 2.300000000000001L6.800000000000001 9.4z"/></svg>
<svg class="ic" style="left:46px;top:194px" width="18" height="21" viewBox="0 0 18 21" fill="none" stroke="#303030" stroke-width="1.2" stroke-linecap="round" stroke-linejoin="round"><path d="M4.6 15.5H4.2c-1.8 0-3-1.2-3-3V4.1c0-1.8 1.2-3 3-3h6.300000000000001c1.7 0 2.9 1.1 3 2.8"/><rect x="4.6" y="4.4" width="12" height="15.1" rx="3.2"/><path d="M8.2 9.2h2.6M8.2 12h4.6M8.2 15.1h4.6"/></svg>
<svg class="ic" style="left:84px;top:198px" width="4" height="14" viewBox="0 0 4 14"><rect x="0.9" y="0.1" width="2.1" height="2.1" rx="0.6" fill="#262626"/><rect x="0.9" y="5.1" width="2.1" height="2.1" rx="0.6" fill="#262626"/><rect x="0.9" y="10.1" width="2.1" height="2.1" rx="0.6" fill="#262626"/></svg>
<div class="hl" style="left:0;top:255px;width:103px"></div>
<svg class="ic" style="left:15px;top:233px" width="15" height="15" viewBox="0 0 15 15" fill="none" stroke="#3648b6" stroke-width="1.1" stroke-linecap="round" stroke-linejoin="round"><path d="M3.9 6.3C2.1 6.6 1.1 7.5 1.1 9.2v2.200000000000001c0 1.1.7 1.8 1.8 1.8h9.2c1.1 0 1.8-.7 1.8-1.8V8.200000000000001c0-1-.5-1.7-1.4-2"/><path d="M4.300000000000001 10l.8-2.5L11.5 1l2.5 2.300000000000001L6.800000000000001 9.4z"/></svg>
<svg class="ic" style="left:46px;top:229px" width="18" height="21" viewBox="0 0 18 21" fill="none" stroke="#303030" stroke-width="1.2" stroke-linecap="round" stroke-linejoin="round"><path d="M4.6 15.5H4.2c-1.8 0-3-1.2-3-3V4.1c0-1.8 1.2-3 3-3h6.300000000000001c1.7 0 2.9 1.1 3 2.8"/><rect x="4.6" y="4.4" width="12" height="15.1" rx="3.2"/><path d="M8.2 9.2h2.6M8.2 12h4.6M8.2 15.1h4.6"/></svg>
<svg class="ic" style="left:84px;top:233px" width="4" height="14" viewBox="0 0 4 14"><rect x="0.9" y="0.1" width="2.1" height="2.1" rx="0.6" fill="#262626"/><rect x="0.9" y="5.1" width="2.1" height="2.1" rx="0.6" fill="#262626"/><rect x="0.9" y="10.1" width="2.1" height="2.1" rx="0.6" fill="#262626"/></svg>
<div class="hl" style="left:0;top:290px;width:103px"></div>
<svg class="ic" style="left:15px;top:268px" width="15" height="15" viewBox="0 0 15 15" fill="none" stroke="#3648b6" stroke-width="1.1" stroke-linecap="round" stroke-linejoin="round"><path d="M3.9 6.3C2.1 6.6 1.1 7.5 1.1 9.2v2.200000000000001c0 1.1.7 1.8 1.8 1.8h9.2c1.1 0 1.8-.7 1.8-1.8V8.200000000000001c0-1-.5-1.7-1.4-2"/><path d="M4.300000000000001 10l.8-2.5L11.5 1l2.5 2.300000000000001L6.800000000000001 9.4z"/></svg>
<svg class="ic" style="left:46px;top:264px" width="18" height="21" viewBox="0 0 18 21" fill="none" stroke="#303030" stroke-width="1.2" stroke-linecap="round" stroke-linejoin="round"><path d="M4.6 15.5H4.2c-1.8 0-3-1.2-3-3V4.1c0-1.8 1.2-3 3-3h6.300000000000001c1.7 0 2.9 1.1 3 2.8"/><rect x="4.6" y="4.4" width="12" height="15.1" rx="3.2"/><path d="M8.2 9.2h2.6M8.2 12h4.6M8.2 15.1h4.6"/></svg>
<svg class="ic" style="left:84px;top:268px" width="4" height="14" viewBox="0 0 4 14"><rect x="0.9" y="0.1" width="2.1" height="2.1" rx="0.6" fill="#262626"/><rect x="0.9" y="5.1" width="2.1" height="2.1" rx="0.6" fill="#262626"/><rect x="0.9" y="10.1" width="2.1" height="2.1" rx="0.6" fill="#262626"/></svg>
<div class="hl" style="left:0;top:325px;width:103px"></div>
<svg class="ic" style="left:15px;top:303px" width="15" height="15" viewBox="0 0 15 15" fill="none" stroke="#3648b6" stroke-width="1.1" stroke-linecap="round" stroke-linejoin="round"><path d="M3.9 6.3C2.1 6.6 1.1 7.5 1.1 9.2v2.200000000000001c0 1.1.7 1.8 1.8 1.8h9.2c1.1 0 1.8-.7 1.8-1.8V8.200000000000001c0-1-.5-1.7-1.4-2"/><path d="M4.300000000000001 10l.8-2.5L11.5 1l2.5 2.300000000000001L6.800000000000001 9.4z"/></svg>
<svg class="ic" style="left:46px;top:299px" width="18" height="21" viewBox="0 0 18 21" fill="none" stroke="#303030" stroke-width="1.2" stroke-linecap="round" stroke-linejoin="round"><path d="M4.6 15.5H4.2c-1.8 0-3-1.2-3-3V4.1c0-1.8 1.2-3 3-3h6.300000000000001c1.7 0 2.9 1.1 3 2.8"/><rect x="4.6" y="4.4" width="12" height="15.1" rx="3.2"/><path d="M8.2 9.2h2.6M8.2 12h4.6M8.2 15.1h4.6"/></svg>
<svg class="ic" style="left:84px;top:303px" width="4" height="14" viewBox="0 0 4 14"><rect x="0.9" y="0.1" width="2.1" height="2.1" rx="0.6" fill="#262626"/><rect x="0.9" y="5.1" width="2.1" height="2.1" rx="0.6" fill="#262626"/><rect x="0.9" y="10.1" width="2.1" height="2.1" rx="0.6" fill="#262626"/></svg>
<div class="hl" style="left:0;top:360px;width:103px"></div>
<svg class="ic" style="left:15px;top:338px" width="15" height="15" viewBox="0 0 15 15" fill="none" stroke="#3648b6" stroke-width="1.1" stroke-linecap="round" stroke-linejoin="round"><path d="M3.9 6.3C2.1 6.6 1.1 7.5 1.1 9.2v2.200000000000001c0 1.1.7 1.8 1.8 1.8h9.2c1.1 0 1.8-.7 1.8-1.8V8.200000000000001c0-1-.5-1.7-1.4-2"/><path d="M4.300000000000001 10l.8-2.5L11.5 1l2.5 2.300000000000001L6.800000000000001 9.4z"/></svg>
<svg class="ic" style="left:46px;top:334px" width="18" height="21" viewBox="0 0 18 21" fill="none" stroke="#303030" stroke-width="1.2" stroke-linecap="round" stroke-linejoin="round"><path d="M4.6 15.5H4.2c-1.8 0-3-1.2-3-3V4.1c0-1.8 1.2-3 3-3h6.300000000000001c1.7 0 2.9 1.1 3 2.8"/><rect x="4.6" y="4.4" width="12" height="15.1" rx="3.2"/><path d="M8.2 9.2h2.6M8.2 12h4.6M8.2 15.1h4.6"/></svg>
<svg class="ic" style="left:84px;top:338px" width="4" height="14" viewBox="0 0 4 14"><rect x="0.9" y="0.1" width="2.1" height="2.1" rx="0.6" fill="#262626"/><rect x="0.9" y="5.1" width="2.1" height="2.1" rx="0.6" fill="#262626"/><rect x="0.9" y="10.1" width="2.1" height="2.1" rx="0.6" fill="#262626"/></svg>
<div class="hl" style="left:0;top:395px;width:103px"></div>
<svg class="ic" style="left:15px;top:373px" width="15" height="15" viewBox="0 0 15 15" fill="none" stroke="#3648b6" stroke-width="1.1" stroke-linecap="round" stroke-linejoin="round"><path d="M3.9 6.3C2.1 6.6 1.1 7.5 1.1 9.2v2.200000000000001c0 1.1.7 1.8 1.8 1.8h9.2c1.1 0 1.8-.7 1.8-1.8V8.200000000000001c0-1-.5-1.7-1.4-2"/><path d="M4.300000000000001 10l.8-2.5L11.5 1l2.5 2.300000000000001L6.800000000000001 9.4z"/></svg>
<svg class="ic" style="left:46px;top:369px" width="18" height="21" viewBox="0 0 18 21" fill="none" stroke="#303030" stroke-width="1.2" stroke-linecap="round" stroke-linejoin="round"><path d="M4.6 15.5H4.2c-1.8 0-3-1.2-3-3V4.1c0-1.8 1.2-3 3-3h6.300000000000001c1.7 0 2.9 1.1 3 2.8"/><rect x="4.6" y="4.4" width="12" height="15.1" rx="3.2"/><path d="M8.2 9.2h2.6M8.2 12h4.6M8.2 15.1h4.6"/></svg>
<svg class="ic" style="left:84px;top:373px" width="4" height="14" viewBox="0 0 4 14"><rect x="0.9" y="0.1" width="2.1" height="2.1" rx="0.6" fill="#262626"/><rect x="0.9" y="5.1" width="2.1" height="2.1" rx="0.6" fill="#262626"/><rect x="0.9" y="10.1" width="2.1" height="2.1" rx="0.6" fill="#262626"/></svg>
<div class="hl" style="left:0;top:430px;width:103px"></div>
<svg class="ic" style="left:15px;top:408px" width="15" height="15" viewBox="0 0 15 15" fill="none" stroke="#3648b6" stroke-width="1.1" stroke-linecap="round" stroke-linejoin="round"><path d="M3.9 6.3C2.1 6.6 1.1 7.5 1.1 9.2v2.200000000000001c0 1.1.7 1.8 1.8 1.8h9.2c1.1 0 1.8-.7 1.8-1.8V8.200000000000001c0-1-.5-1.7-1.4-2"/><path d="M4.300000000000001 10l.8-2.5L11.5 1l2.5 2.300000000000001L6.800000000000001 9.4z"/></svg>
<svg class="ic" style="left:46px;top:404px" width="18" height="21" viewBox="0 0 18 21" fill="none" stroke="#303030" stroke-width="1.2" stroke-linecap="round" stroke-linejoin="round"><path d="M4.6 15.5H4.2c-1.8 0-3-1.2-3-3V4.1c0-1.8 1.2-3 3-3h6.300000000000001c1.7 0 2.9 1.1 3 2.8"/><rect x="4.6" y="4.4" width="12" height="15.1" rx="3.2"/><path d="M8.2 9.2h2.6M8.2 12h4.6M8.2 15.1h4.6"/></svg>
<svg class="ic" style="left:84px;top:408px" width="4" height="14" viewBox="0 0 4 14"><rect x="0.9" y="0.1" width="2.1" height="2.1" rx="0.6" fill="#262626"/><rect x="0.9" y="5.1" width="2.1" height="2.1" rx="0.6" fill="#262626"/><rect x="0.9" y="10.1" width="2.1" height="2.1" rx="0.6" fill="#262626"/></svg>
</div>
<div class="vl" style="left:1453px;top:92px;height:533px"></div>
<div class="hl" style="left:1453px;top:127px;width:110px"></div>
<div class="t" style="top:100px;letter-spacing:-0.855px;font-weight:bold;left:1477.6px;">Chức năng</div>
<div class="abs" style="left:1556px;top:163px;width:7px;height:427px;background:#9b9b9b"></div>
<div class="abs" style="left:1556px;top:204px;width:7px;height:87px;background:#878787"></div>
<div class="abs" style="left:285px;top:590px;width:1277px;height:35px;background:#939393;border-top:1px solid #8b8b8b"></div>
<div class="vl" style="left:317px;top:590px;height:35px"></div>
<div class="vl" style="left:367px;top:590px;height:35px"></div>
<div class="vl" style="left:497px;top:590px;height:35px"></div>
<div class="vl" style="left:677px;top:590px;height:35px"></div>
<div class="vl" style="left:847px;top:590px;height:35px"></div>
<div class="vl" style="left:1047px;top:590px;height:35px"></div>
<div class="vl" style="left:1207px;top:590px;height:35px"></div>
<div class="vl" style="left:1327px;top:590px;height:35px"></div>
<div class="vl" style="left:1453px;top:590px;height:35px"></div>
<div class="t" style="top:598px;letter-spacing:0.101px;font-weight:bold;left:1036.7px;width:160px;text-align:right;">112.375.612.819 Đ</div>
<div class="t" style="top:598px;letter-spacing:0.174px;font-weight:bold;left:1217.17px;width:100px;text-align:right;">74</div>
<div class="t" style="top:598px;letter-spacing:0.083px;font-weight:bold;left:1337.08px;width:113px;text-align:right;">2.090.446.613</div>
<div class="abs" style="left:285px;top:625px;width:1277px;height:7px;background:#939393"></div>
<div class="abs" style="left:285px;top:625px;width:601px;height:7px;background:#7f7f7f"></div>
<div class="t" style="top:642px;letter-spacing:-0.242px;left:295.7px;">Tổng số:</div>
<div class="t" style="top:642px;letter-spacing:-0.869px;font-weight:bold;left:349.1px;">59</div>
<div class="t" style="top:642px;letter-spacing:-0.159px;left:367px;">bản ghi</div>
<div class="t" style="top:642px;letter-spacing:0.076px;left:1295.2px;">Số dòng/trang</div>
<div class="t" style="top:642px;letter-spacing:-0.102px;left:1389.6px;">100</div>
<svg class="ic" style="left:1416px;top:648px" width="10" height="7" viewBox="0 0 10 7"><path d="M1.2 1.2L5 5 8.8 1.2" fill="none" stroke="#0c0c0c" stroke-width="1.7" stroke-linecap="round" stroke-linejoin="round"/></svg>
<div class="t" style="left:1458px;top:642px;color:#666;font-size:12px">&lt;</div>
<div class="t" style="top:642px;letter-spacing:-0.296px;left:1476.4px;">Trang</div>
<div class="t" style="top:642px;letter-spacing:0.087px;font-weight:bold;left:1523.5px;">1</div>
<div class="t" style="left:1546px;top:642px;color:#666;font-size:12px">&gt;</div>
<div class="abs" style="left:285px;top:669px;width:1278px;height:4px;background:#9b9b9b;border-top:1px solid #666;border-bottom:1px solid #707070"></div>
<div class="t" style="top:678px;letter-spacing:-0.024px;color:#2c3b9e;left:301.3px;">Lịch sử biến động</div>
<div class="abs" style="left:301px;top:703px;width:104px;height:2px;background:#2b3a9b"></div>
<div class="t" style="top:678px;letter-spacing:-0.088px;left:437px;">Thông tin kê khai</div>
<div class="t" style="top:678px;letter-spacing:-0.145px;left:567.2px;">Tệp đính kèm</div>
<div class="abs" style="left:1537px;top:681px;width:16px;height:16px;border-radius:50%;background:#8b8c90"></div>
<svg class="ic" style="left:1541px;top:686px" width="8" height="6" viewBox="0 0 8 6"><path d="M1 1.2L4 4.2 7 1.2" fill="none" stroke="#2b3ab0" stroke-width="1.4" stroke-linecap="round" stroke-linejoin="round"/></svg>
<div class="abs" style="left:285px;top:706px;width:1278px;height:35px;background:#959595"></div>
<div class="hl" style="left:285px;top:741px;width:1278px"></div>
<div class="hl" style="left:285px;top:776px;width:1278px"></div>
<div class="vl" style="left:344px;top:706px;height:71px"></div>
<div class="vl" style="left:464px;top:706px;height:71px"></div>
<div class="vl" style="left:614px;top:706px;height:71px"></div>
<div class="vl" style="left:764px;top:706px;height:71px"></div>
<div class="vl" style="left:914px;top:706px;height:71px"></div>
<div class="vl" style="left:1064px;top:706px;height:71px"></div>
<div class="vl" style="left:1214px;top:706px;height:71px"></div>
<div class="vl" style="left:1364px;top:706px;height:71px"></div>
<div class="vl" style="left:1473px;top:706px;height:71px"></div>
<div class="t" style="top:714px;letter-spacing:-0.531px;font-weight:bold;left:302.7px;">STT</div>
<div class="t" style="top:714px;letter-spacing:-0.705px;font-weight:bold;left:354.9px;">Số chứng từ</div>
<div class="t" style="top:714px;letter-spacing:-0.661px;font-weight:bold;left:496.8px;">Ngày chứng từ</div>
<div class="t" style="top:714px;letter-spacing:-0.446px;font-weight:bold;left:643.5px;">Ngày biến động</div>
<div class="t" style="top:714px;letter-spacing:-0.647px;font-weight:bold;left:775.2px;">Nội dung</div>
<div class="t" style="top:714px;letter-spacing:-0.564px;font-weight:bold;left:913.04px;width:140px;text-align:right;">Nguyên giá</div>
<div class="t" style="top:714px;letter-spacing:-0.5px;font-weight:bold;left:1063.2px;width:140px;text-align:right;">Số tiền thực hiện</div>
<div class="t" style="top:714px;letter-spacing:-0.3px;font-weight:bold;left:1213.3px;width:140px;text-align:right;">Giá trị HM/KH</div>
<div class="abs" style="left:1364px;top:706px;width:109px;height:35px;overflow:hidden"><div class="t" style="top:8px;letter-spacing:-0.28px;font-weight:bold;left:59.299999999999955px;">HM/KH lũy kế</div></div>
<div class="t" style="top:714px;letter-spacing:-0.855px;font-weight:bold;left:1487.3px;">Chức năng</div>
<div class="t" style="top:750px;letter-spacing:-0.181px;left:284.91px;width:59px;text-align:center;">1</div>
<div class="t" style="top:750px;letter-spacing:0.358px;left:505.3px;">01/01/2023</div>
<div class="t" style="top:750px;letter-spacing:0.358px;left:655.3px;">01/01/2023</div>
<div class="t" style="top:750px;letter-spacing:-0.132px;left:775.2px;">Cập nhật loại tài sản t...</div>
<div class="t" style="top:750px;letter-spacing:-0.101px;color:#2f3fae;left:1478.3px;">Hủy cập nhật</div>
<div class="abs" style="left:285px;top:822px;width:1278px;height:8px;background:#939393;border-bottom:1px solid #979797"></div>
<div class="abs" style="left:285px;top:822px;width:1107px;height:7px;background:#7f7f7f"></div>
<div class="abs" style="left:1566px;top:560px;width:9px;height:277px;background:linear-gradient(to right,rgba(255,255,255,0),rgba(255,255,255,0.16));-webkit-mask-image:linear-gradient(to bottom,transparent,#000 60px);mask-image:linear-gradient(to bottom,transparent,#000 60px)"></div>
<div class="abs" style="left:1563px;top:302px;width:14px;height:90px;border-radius:6px 0 0 6px;background:#2b3a9b"></div>
<svg class="ic" style="left:1568px;top:342px" width="6" height="10" viewBox="0 0 6 10"><path d="M4.5 1.5L1.5 5l3 3.500000000000001" fill="none" stroke="#a0a4b8" stroke-width="1.1" stroke-linecap="round" stroke-linejoin="round"/></svg>
</div>
<div id="modal">
<svg class="abs" style="left:34px;top:44px;overflow:visible" width="38" height="34" viewBox="0 0 38 34"><path d="M16.6 2.4c1.1-1.9 3.7-1.9 4.800000000000001 0l15 26c1.1 1.9-.3 4.1-2.4 4.1H4c-2.1 0-3.5-2.2-2.4-4.1z" fill="#ffc107"/><rect x="17.2" y="11.6" width="3.6" height="10" rx="1.8" fill="#fff"/><circle cx="19" cy="26.3" r="2" fill="#fff"/></svg>
<div class="ln" style="top:35.5px"><span style="letter-spacing:-0.69px">Tài sản </span><b class="bl" style="letter-spacing:-0.586px">ô tô 8012 - ô tô 8012 </b><span style="letter-spacing:-0.445px">đã chuyển đổi loại tài sản</span></div>
<div class="ln" style="top:59.5px"><span style="letter-spacing:-0.628px">ngày </span><b class="bl" style="letter-spacing:-0.078px">01/01/2023</b></div>
<div class="ln" style="top:83.5px"><span style="letter-spacing:-0.475px">Loại tài sản cũ: </span><b class="bk" style="letter-spacing:-0.91px">Xe 4 đến 5 chỗ</b></div>
<div class="ln" style="top:107.5px"><span style="letter-spacing:-0.519px">Loại tài sản mới: </span><b class="bk" style="letter-spacing:-0.91px">Xe 4 đến 5 chỗ</b></div>
<div class="ln" style="top:131.5px"><span style="letter-spacing:-0.766px">Chức năng </span><b class="bl" style="letter-spacing:-0.928px">Hủy chuyển loại tài sản </b><span style="letter-spacing:-0.489px">sẽ cập nhật lại thông</span></div>
<div class="ln" style="top:155.5px"><span style="letter-spacing:-0.397px">tin của tài sản theo loại tài sản cũ: </span><b class="bk" style="letter-spacing:-0.96px">Xe 4 đến 5 chỗ</b><span style="letter-spacing:-0.453px">.</span></div>
<div class="ln" style="top:179.5px"><span style="letter-spacing:-0.553px">Anh/chị có muốn thực hiện chức năng này?</span></div>
<div class="k"><span style="display:inline-block;transform:scaleX(0.905)">Không</span></div>
<div class="h"><span style="display:inline-block;transform:scaleX(0.88);white-space:nowrap">Hủy chuyển đổi</span></div>
<div class="red"></div>
</div>
</body></html>
